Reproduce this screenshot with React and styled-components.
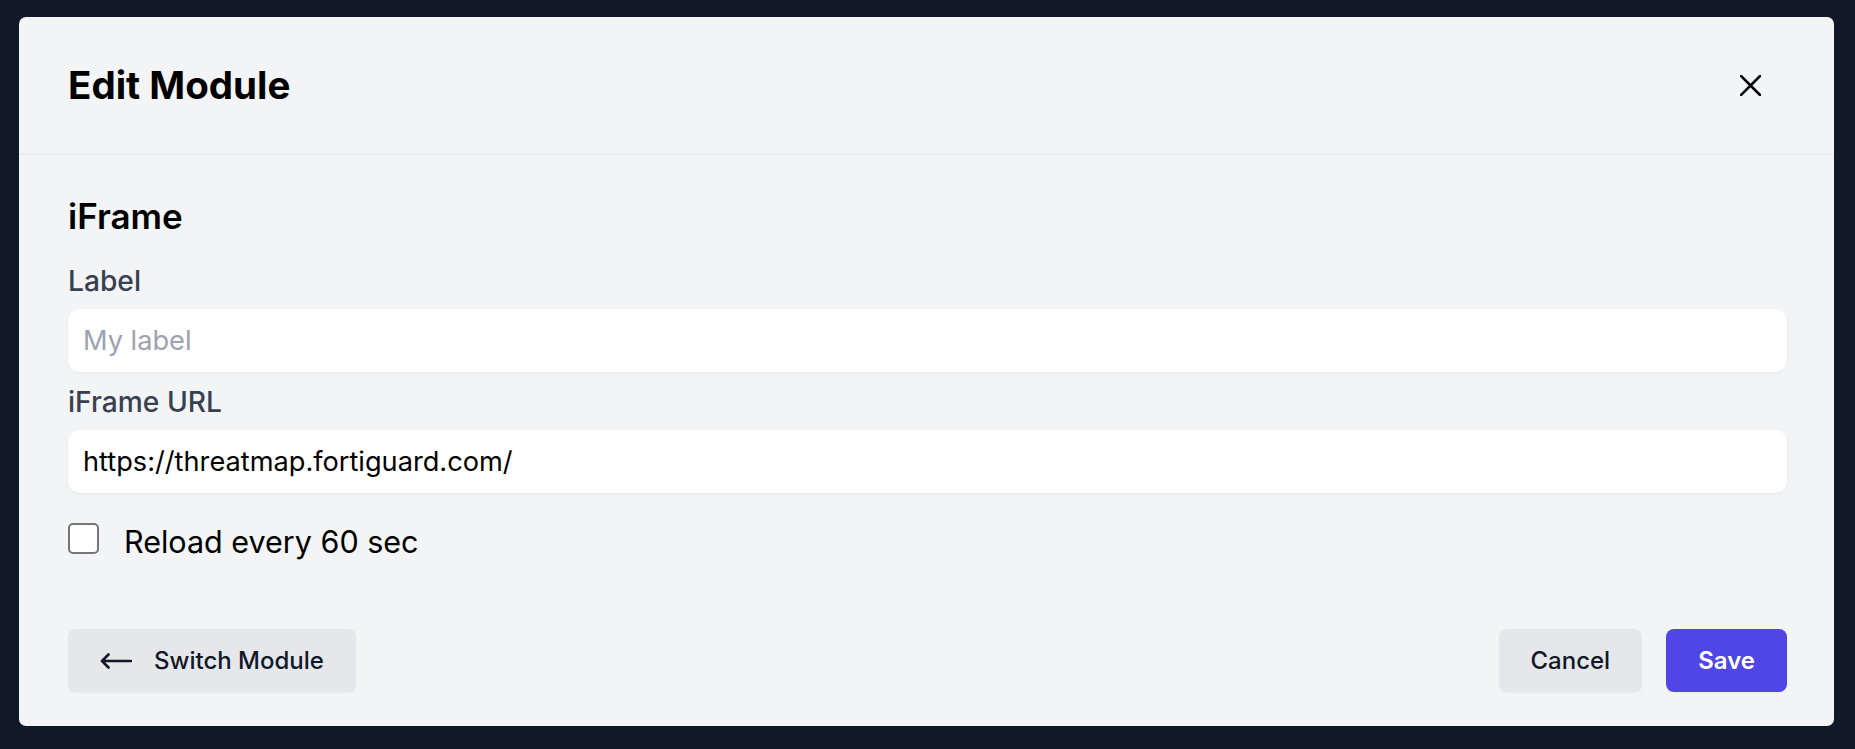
import styled, { createGlobalStyle } from "styled-components";

const GlobalStyle = createGlobalStyle`
  body {
    margin: 0;
    background: #111827;
    font-family: Inter, "Noto Sans", sans-serif;
  }
`;

export default function App() {
  return (
    <>
      <GlobalStyle />
      <Page>
        <Modal>
          <Header>
            <Title>Edit Module</Title>
            <CloseButton aria-label="Close">
              <svg width="21" height="21" viewBox="0 0 21 21" fill="none">
                <path d="M1 1L20 20M20 1L1 20" stroke="#000" strokeWidth="2.6" strokeLinecap="square" />
              </svg>
            </CloseButton>
          </Header>
          <Body>
            <SectionTitle>iFrame</SectionTitle>
            <Field>
              <FieldLabel>Label</FieldLabel>
              <TextInput placeholder="My label" />
            </Field>
            <Field>
              <FieldLabel>iFrame URL</FieldLabel>
              <TextInput defaultValue="https://threatmap.fortiguard.com/" />
            </Field>
            <CheckRow>
              <CheckBox type="checkbox" />
              <CheckText>Reload every 60 sec</CheckText>
            </CheckRow>
          </Body>
          <Footer>
            <Button>
              <svg width="32" height="16" viewBox="0 0 32 16" fill="none">
                <path d="M2 8H31M8.5 1.5L2 8L8.5 14.5" stroke="#111827" strokeWidth="2.6" strokeLinecap="round" strokeLinejoin="round" />
              </svg>
              Switch Module
            </Button>
            <Actions>
              <Button>Cancel</Button>
              <Button $primary>Save</Button>
            </Actions>
          </Footer>
        </Modal>
      </Page>
    </>
  );
}

const Page = styled.div`
  padding: 17px 21px 24px 19px;
`;

const Modal = styled.div`
  background: #f3f4f6;
  border-radius: 7px;
  display: flex;
  flex-direction: column;
`;

const Header = styled.div`
  display: flex;
  align-items: center;
  justify-content: space-between;
  padding: 46px 73px 46px 49px;
  border-bottom: 2px solid #e9ebee;
`;

const Title = styled.h1`
  margin: 0;
  font-size: 38.5px;
  line-height: 44px;
  font-weight: 700;
  color: #000;
`;

const CloseButton = styled.button`
  display: flex;
  align-items: center;
  justify-content: center;
  padding: 0;
  border: none;
  background: none;
  cursor: pointer;
`;

const Body = styled.div`
  display: flex;
  flex-direction: column;
  padding: 42px 47px 38px 49px;
`;

const SectionTitle = styled.h2`
  margin: 0 0 28px;
  font-size: 35px;
  line-height: 38px;
  font-weight: 600;
  color: #000;
`;

const Field = styled.label`
  display: flex;
  flex-direction: column;
  gap: 10px;
  margin-bottom: 12px;
`;

const FieldLabel = styled.span`
  font-size: 28.2px;
  line-height: 36px;
  font-weight: 500;
  color: #374151;
`;

const TextInput = styled.input`
  height: 63px;
  box-sizing: border-box;
  padding: 0 15px;
  border: none;
  border-radius: 12px;
  background: #fff;
  box-shadow: 0 1px 3px rgba(0, 0, 0, 0.06);
  font-family: inherit;
  font-size: 27.2px;
  color: #000;
  outline: none;

  &::placeholder {
    color: #9ca3af;
  }
`;

const CheckRow = styled.label`
  display: flex;
  align-items: center;
  gap: 25px;
  margin-top: 10px;
  height: 46px;
`;

const CheckBox = styled.input`
  appearance: none;
  margin: 0;
  width: 31px;
  height: 31px;
  box-sizing: border-box;
  border: 2px solid #767676;
  border-radius: 5px;
  background: #fff;
`;

const CheckText = styled.span`
  margin-top: 8px;
  font-size: 30.5px;
  line-height: 36px;
  color: #000;
`;

const Footer = styled.div`
  display: flex;
  align-items: center;
  justify-content: space-between;
  padding: 30px 47px 34px 49px;
`;

const Actions = styled.div`
  display: flex;
  gap: 24px;
`;

const Button = styled.button`
  display: flex;
  align-items: center;
  gap: 22px;
  height: 63px;
  padding: 0 32px;
  border: none;
  border-radius: 8px;
  background: ${({ $primary }) => ($primary ? "#4f46e5" : "#e5e7eb")};
  color: ${({ $primary }) => ($primary ? "#fff" : "#111827")};
  box-shadow: 0 1px 2px rgba(0, 0, 0, 0.05);
  font-family: inherit;
  font-size: 24px;
  font-weight: ${({ $primary }) => ($primary ? 600 : 500)};
  cursor: pointer;
`;
